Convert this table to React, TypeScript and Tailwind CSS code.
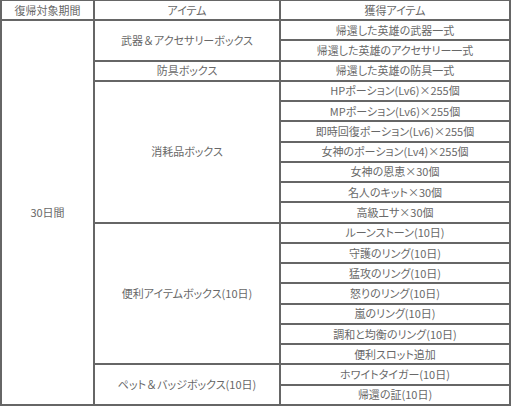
const groups = [
  { box: "武器＆アクセサリーボックス", items: ["帰還した英雄の武器一式", "帰還した英雄のアクセサリー一式"] },
  { box: "防具ボックス", items: ["帰還した英雄の防具一式"] },
  {
    box: "消耗品ボックス",
    items: [
      "HPポーション(Lv6)×255個",
      "MPポーション(Lv6)×255個",
      "即時回復ポーション(Lv6)×255個",
      "女神のポーション(Lv4)×255個",
      "女神の恩恵×30個",
      "名人のキット×30個",
      "高級エサ×30個",
    ],
  },
  {
    box: "便利アイテムボックス(10日)",
    items: [
      "ルーンストーン(10日)",
      "守護のリング(10日)",
      "猛攻のリング(10日)",
      "怒りのリング(10日)",
      "嵐のリング(10日)",
      "調和と均衡のリング(10日)",
      "便利スロット追加",
    ],
  },
  { box: "ペット＆バッジボックス(10日)", items: ["ホワイトタイガー(10日)", "帰還の証(10日)"] },
];

// row spans used by the box column
const spans: Record<number, string> = {
  1: "row-span-1",
  2: "row-span-2",
  7: "row-span-7",
};

const cell =
  "bg-white flex items-center justify-center whitespace-nowrap text-[11px] leading-none text-[#686868] [font-feature-settings:'palt']";

// keep the full-width ampersand at its natural width
function Label({ text }: { text: string }) {
  const parts = text.split("＆");
  if (parts.length === 1) return <>{text}</>;
  return (
    <>
      {parts[0]}
      <span className="[font-feature-settings:normal]">＆</span>
      {parts[1]}
    </>
  );
}

export default function App() {
  return (
    <div className="w-[511px] h-[406px] bg-[#666] pt-[1px] px-[2px] pb-[2px] grid grid-cols-[91px_184px_228px] grid-rows-[18px_repeat(19,minmax(0,1fr))] gap-[2px] font-['Noto_Sans_CJK_JP','Noto_Sans',sans-serif]">
      {/* Header */}
      <div className={cell}>復帰対象期間</div>
      <div className={cell}>アイテム</div>
      <div className={cell}>獲得アイテム</div>

      <div className={`${cell} col-start-1 row-span-19`}>30日間</div>

      {groups.map((g) => [
        <div key={g.box} className={`${cell} col-start-2 ${spans[g.items.length]}`}>
          <Label text={g.box} />
        </div>,
        ...g.items.map((it) => (
          <div key={it} className={`${cell} col-start-3`}>
            {it}
          </div>
        )),
      ])}
    </div>
  );
}
